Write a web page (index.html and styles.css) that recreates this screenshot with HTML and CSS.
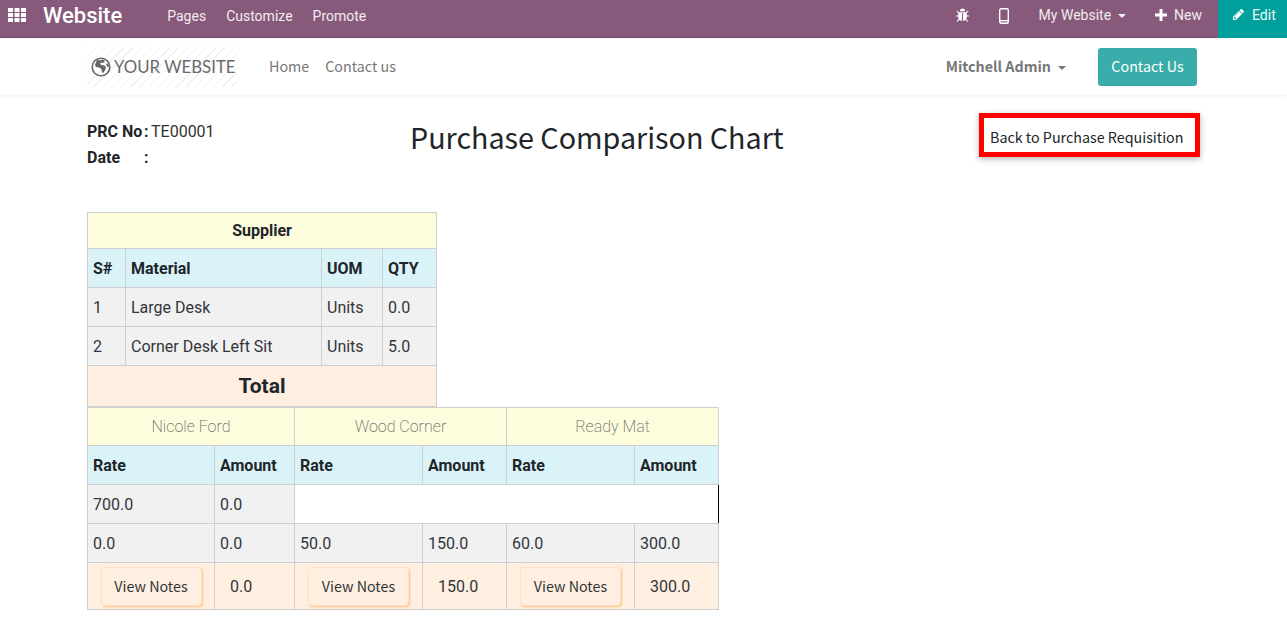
FILE: index.html
```html
<!DOCTYPE html>
<html lang="en">
<head>
    <meta charset="UTF-8">
    <meta name="viewport" content="width=device-width, initial-scale=1.0">
    <title>Purchase Comparison Chart</title>
    <link rel="stylesheet" href="styles.css">
</head>
<body>

    <div class="topbar">
        <div class="topbar-left">
            <svg class="apps-icon" viewBox="0 0 18 14">
                <rect x="0" y="0" width="5" height="4"/><rect x="6.500" y="0" width="5" height="4"/><rect x="13" y="0" width="5" height="4"/>
                <rect x="0" y="5" width="5" height="4"/><rect x="6.500" y="5" width="5" height="4"/><rect x="13" y="5" width="5" height="4"/>
                <rect x="0" y="10" width="5" height="4"/><rect x="6.500" y="10" width="5" height="4"/><rect x="13" y="10" width="5" height="4"/>
            </svg>
            <span class="brand">Website</span>
            <a class="top-link first">Pages</a>
            <a class="top-link">Customize</a>
            <a class="top-link">Promote</a>
        </div>
        <div class="topbar-right">
            <svg class="bug-icon" viewBox="0 0 1792 1792"><path d="M1696 960q0 26-19 45t-45 19h-224q0 171-67 290l208 209q19 19 19 45t-19 45q-18 19-45 19t-45-19l-198-197q-5 5-15 13t-42 28.500-65 36.500-82 29-97 13v-896h-128v896q-51 0-101.500-13.500t-87-33-66-39-43.500-32.500l-15-14-183 207q-20 21-48 21-24 0-43-16-19-18-20.500-44.500t15.500-46.500l202-227q-58-114-58-274h-224q-26 0-45-19t-19-45 19-45 45-19h224v-294l-173-173q-19-19-19-45t19-45 45-19 45 19l173 173h844l173-173q19-19 45-19t45 19 19 45-19 45l-173 173v294h224q26 0 45 19t19 45zm-480-576h-640q0-133 93.500-226.500t226.500-93.500 226.500 93.500 93.500 226.500z"/></svg>
            <svg class="mobile-icon" viewBox="0 0 10 16">
                <rect x="0.700" y="0.700" width="8.600" height="14.600" rx="1.500"/>
                <line x1="0.700" y1="12.700" x2="9.300" y2="12.700"/>
            </svg>
            <a class="top-link my-website">My Website<span class="caret"></span></a>
            <a class="top-link new-link">
                <svg class="plus-icon" viewBox="0 0 12 12"><path d="M4.500 0h3v4.500H12v3H7.500V12h-3V7.500H0v-3h4.500z"/></svg>New
            </a>
            <a class="edit-btn">
                <svg class="pencil-icon" viewBox="0 0 1792 1792"><path d="M491 1536l91-91-235-235-91 91v107h128v128h107zm523-928q0-22-22-22-10 0-17 7l-542 542q-7 7-7 17 0 22 22 22 10 0 17-7l542-542q7-7 7-17zm-54-192l416 416-832 832h-416v-416zm683 96q0 53-37 90l-166 166-416-416 166-165q36-38 90-38 53 0 91 38l235 234q37 39 37 91z"/></svg>Edit
            </a>
        </div>
    </div>

    <div class="navbar">
        <div class="nav-left">
            <div class="logo">
                <svg class="globe" viewBox="0 0 20 20">
                    <circle cx="10" cy="10" r="8.800"/>
                    <path class="land" d="M6 2.500l3 1 3-1 2 1.500-2 2-2-.5-1 1.500 1.500 1 3 .5 1.500 2-1 3-2 2.500-1-.5-.5-3.500-2.500-1.500-3-.5-1-2.500 1.500-3zM15 7l2-.5 1 3-1.500.5z"/>
                </svg>
                <span>YOUR WEBSITE</span>
            </div>
            <a class="nav-link">Home</a>
            <a class="nav-link">Contact us</a>
        </div>
        <div class="nav-right">
            <a class="user-link">Mitchell Admin<span class="caret"></span></a>
            <a class="contact-btn">Contact Us</a>
        </div>
    </div>

    <div class="content">
        <div class="page-head">
            <div class="prc-info">
                <div class="info-row"><b class="info-label">PRC No</b><b class="colon">:</b><span class="prc-value">TE00001</span></div>
                <div class="info-row"><b class="info-label">Date</b><b class="colon">:</b></div>
            </div>
            <h1>Purchase Comparison Chart</h1>
            <a class="back-btn">Back to Purchase Requisition</a>
        </div>

        <table class="grid supplier-table">
            <colgroup>
                <col class="c-sn"><col class="c-material"><col class="c-uom"><col class="c-qty">
            </colgroup>
            <tr class="row-yellow row-title"><th colspan="4">Supplier</th></tr>
            <tr class="row-blue"><th>S#</th><th>Material</th><th>UOM</th><th>QTY</th></tr>
            <tr class="row-grey"><td>1</td><td>Large Desk</td><td>Units</td><td>0.0</td></tr>
            <tr class="row-grey"><td>2</td><td>Corner Desk Left Sit</td><td>Units</td><td>5.0</td></tr>
            <tr class="row-orange row-total"><th colspan="4">Total</th></tr>
        </table>

        <table class="grid quotes-table">
            <colgroup>
                <col class="c-rate1"><col class="c-amt1"><col class="c-rate2"><col class="c-amt2"><col class="c-rate3"><col class="c-amt3">
            </colgroup>
            <tr class="row-yellow row-vendor">
                <td colspan="2">Nicole Ford</td>
                <td colspan="2">Wood Corner</td>
                <td colspan="2">Ready Mat</td>
            </tr>
            <tr class="row-blue">
                <th>Rate</th><th>Amount</th><th>Rate</th><th>Amount</th><th>Rate</th><th>Amount</th>
            </tr>
            <tr class="row-grey">
                <td>700.0</td><td>0.0</td><td class="empty-cell" colspan="4"></td>
            </tr>
            <tr class="row-grey">
                <td>0.0</td><td>0.0</td><td>50.0</td><td>150.0</td><td>60.0</td><td>300.0</td>
            </tr>
            <tr class="row-orange row-notes">
                <td><a class="notes-btn">View Notes</a></td><td class="sum">0.0</td>
                <td><a class="notes-btn">View Notes</a></td><td class="sum">150.0</td>
                <td><a class="notes-btn">View Notes</a></td><td class="sum">300.0</td>
            </tr>
        </table>
    </div>

</body>
</html>
```

FILE: styles.css
```css
* {
    margin: 0;
    padding: 0;
    box-sizing: border-box;
}

:root {
    --bar-color: #875a7b;
    --teal: #00a09d;
    --line: #cfcfcf;
    --text: #212529;
}

html {
    overflow-x: hidden;
}

body {
    background: white;
    color: var(--text);
    font-family: "Noto Sans CJK SC", sans-serif;
    font-size: 14.300px;
}

/* top bar */
.topbar {
    display: flex;
    justify-content: space-between;
    height: 38px;
    background: var(--bar-color);
    border-bottom: 1px solid #6e4f66;
    color: white;
    font-family: Roboto, sans-serif;
}

.topbar-left, .topbar-right {
    display: flex;
    align-items: center;
}

.apps-icon {
    width: 18px;
    height: 14px;
    margin-left: 8px;
    margin-top: -8px;
    fill: white;
}

.brand {
    margin-left: 17px;
    margin-top: -6px;
    font-size: 22px;
    font-weight: 500;
}

.top-link {
    font-size: 14px;
    color: #f2ecf0;
    margin-right: 20px;
    margin-top: -6px;
}

.top-link.first {
    margin-left: 45px;
}

.bug-icon {
    width: 15px;
    height: 15px;
    fill: white;
    margin-top: -6px;
    margin-right: 29px;
}

.mobile-icon {
    width: 10px;
    height: 16px;
    margin-top: -6px;
    margin-right: 30px;
    fill: none;
    stroke: white;
    stroke-width: 1.400;
}

.my-website {
    margin-right: 29px;
    margin-top: -8px;
}

.caret {
    display: inline-block;
    margin-left: 7px;
    vertical-align: 2px;
    border-top: 4px solid currentColor;
    border-left: 4px solid transparent;
    border-right: 4px solid transparent;
}

.new-link {
    margin-right: 16px;
    margin-top: -8px;
}

.plus-icon {
    width: 12px;
    height: 12px;
    margin-right: 7px;
    fill: white;
    vertical-align: -1px;
}

.edit-btn {
    display: flex;
    align-items: center;
    width: 69px;
    height: 38px;
    padding: 0 0 8px 14px;
    background: var(--teal);
    font-size: 14px;
    color: #f2f8f8;
}

.pencil-icon {
    width: 13px;
    height: 13px;
    margin-right: 7px;
    fill: white;
}

/* website nav */
.navbar {
    display: flex;
    justify-content: space-between;
    align-items: center;
    height: 57px;
    padding: 0 90px 0 87px;
    box-shadow: 0 2px 4px rgba(0, 0, 0, 0.05);
}

.nav-left, .nav-right {
    display: flex;
    align-items: center;
}

.logo {
    display: flex;
    align-items: center;
    width: 150px;
    height: 40px;
    padding-left: 4px;
    margin-right: 32px;
    background: repeating-linear-gradient(135deg, #f0f0f0 0 1px, white 1px 6.500px);
    font-family: Lato, sans-serif;
    font-size: 16.800px;
    color: #6a6a6a;
}

.globe {
    width: 20px;
    height: 20px;
    margin-right: 3px;
    fill: none;
    stroke: #666;
    stroke-width: 1.600;
}

.globe .land {
    fill: #666;
    stroke: none;
}

.nav-link {
    margin-right: 16px;
    padding-bottom: 2px;
    color: #777;
}

.user-link {
    font-weight: 700;
    color: #777;
    margin-right: 32px;
    padding-bottom: 2px;
}

.contact-btn {
    display: block;
    width: 99px;
    height: 38px;
    line-height: 35px;
    text-align: center;
    background: #3aadaa;
    border-radius: 3px;
    color: white;
}

/* page */
.content {
    padding: 0 87px;
}

.page-head {
    display: flex;
    align-items: flex-start;
    width: 1113px;
    height: 117px;
    padding-top: 18px;
}

.prc-info {
    width: 180px;
    padding-top: 7px;
    font-family: Roboto, sans-serif;
    font-size: 16px;
}

.info-row {
    display: flex;
    height: 26px;
    line-height: 24px;
}

.info-label {
    width: 57px;
    font-weight: 700;
}

.colon {
    width: 7px;
}

.prc-value {
    color: #333;
}

h1 {
    width: 373px;
    margin: 5px 0 0 143px;
    font-size: 28.700px;
    font-weight: 400;
    line-height: 38px;
    white-space: nowrap;
}

.back-btn {
    display: block;
    width: 221px;
    height: 44px;
    margin-left: auto;
    padding-left: 6px;
    border: 5px solid red;
    box-shadow: 0 2px 6px rgba(0, 0, 0, 0.3);
    line-height: 37px;
    white-space: nowrap;
}

.grid {
    border-collapse: collapse;
    table-layout: fixed;
    font-family: Roboto, sans-serif;
    font-size: 16px;
}

.grid th, .grid td {
    border: 1px solid var(--line);
    padding: 0 5px;
    text-align: left;
    height: 39px;
}

.grid td {
    color: #33363a;
}

.supplier-table {
    width: 349px;
}

.quotes-table {
    width: 631px;
}

.c-sn { width: 38px; }
.c-material { width: 196px; }
.c-uom { width: 61px; }
.c-qty { width: 54px; }

.c-rate1 { width: 127px; }
.c-amt1 { width: 80px; }
.c-rate2 { width: 128px; }
.c-amt2 { width: 84px; }
.c-rate3 { width: 128px; }
.c-amt3 { width: 84px; }

.row-yellow { background: #fdfddd; }
.row-blue { background: #daf3f9; }
.row-grey { background: #f1f1f1; }
.row-orange { background: #feefe0; }

.grid .row-title th {
    height: 36px;
    text-align: center;
}

.grid .row-total th {
    height: 41px;
    text-align: center;
    font-size: 21px;
}

.grid .row-vendor td {
    height: 38px;
    text-align: center;
    font-weight: 200;
    color: #666;
}

.grid .empty-cell {
    background: white;
    border-right: 1px solid black;
}

.grid .row-notes td {
    height: 47px;
    font-size: 16px;
}

.grid .row-notes .sum {
    padding-left: 15px;
}

.notes-btn {
    display: block;
    width: 101px;
    height: 39px;
    margin: 0 auto;
    line-height: 36px;
    text-align: center;
    font-family: "Noto Sans CJK SC", sans-serif;
    font-size: 14.300px;
    background: #feefe0;
    border: 1px solid #fee2c4;
    border-radius: 4px;
    box-shadow: 1px 1px 2px #ffc080;
}
```
